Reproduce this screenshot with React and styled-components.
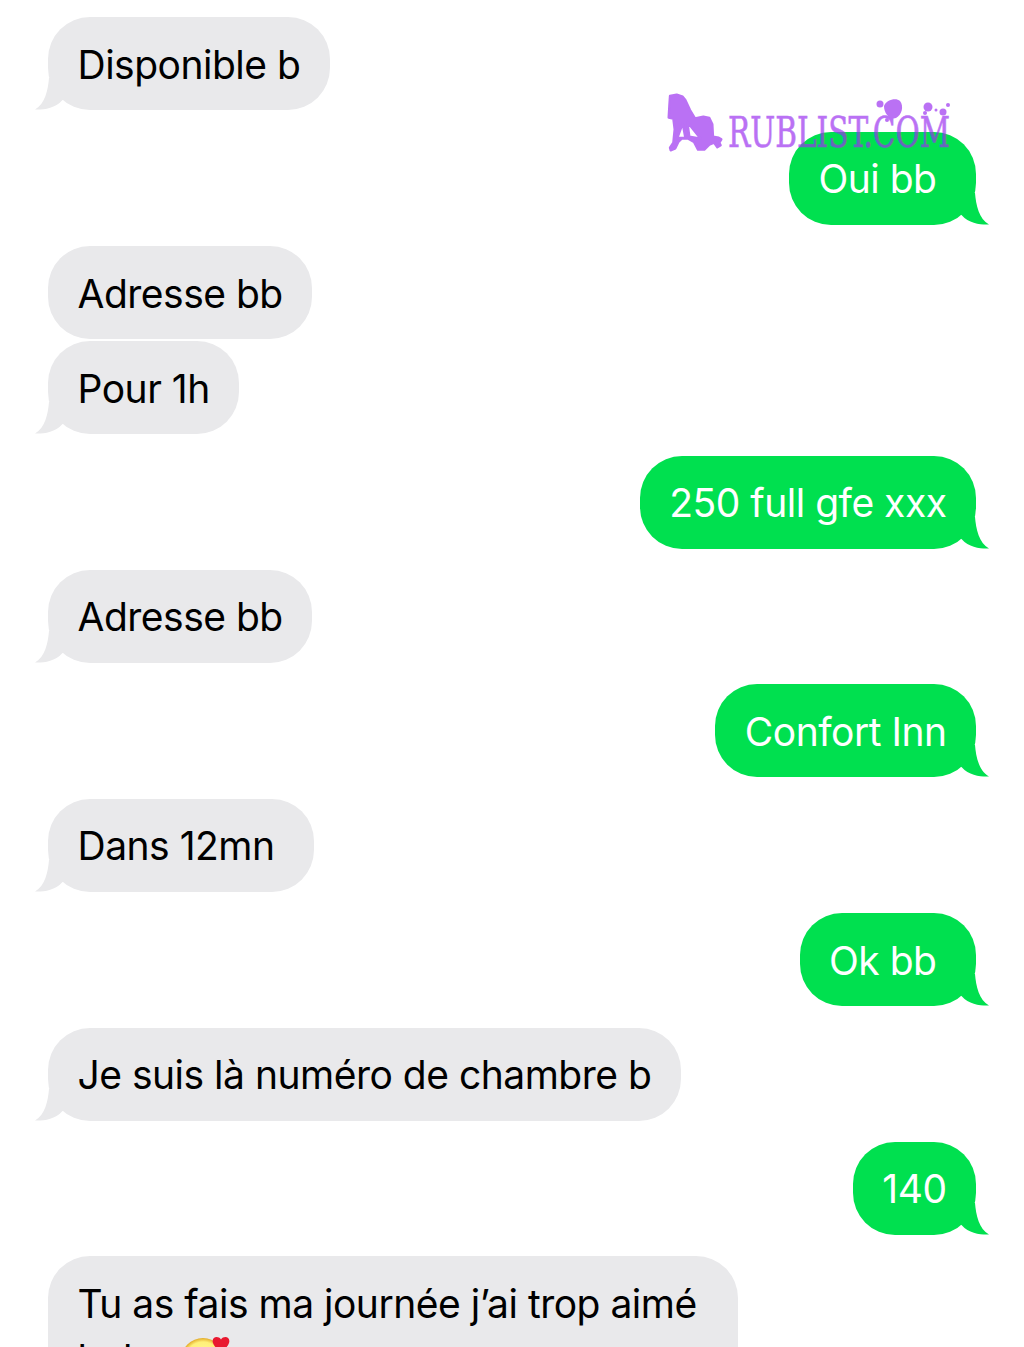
import React from "react";
import styled, { createGlobalStyle } from "styled-components";

const GlobalStyle = createGlobalStyle`
  html, body {
    margin: 0;
    padding: 0;
    background: #fff;
  }
`;

const Page = styled.div`
  position: relative;
  width: 1024px;
  height: 1347px;
  overflow: hidden;
  background: #fff;
  font-family: Inter, "Liberation Sans", sans-serif;
`;

const Thread = styled.div`
  display: flex;
  flex-direction: column;
  gap: 21.4px;
  padding: 17.4px 48px 0;
`;

const Group = styled.div`
  display: flex;
  flex-direction: column;
  align-items: flex-start;
  gap: 2px;
`;

const Bubble = styled.div`
  position: relative;
  align-self: ${(p) => (p.$sent ? "flex-end" : "flex-start")};
  box-sizing: border-box;
  max-width: 690px;
  padding: 23.5px ${(p) => (p.$trailing ? "39.5px" : "29.5px")} 21.5px 29.5px;
  border-radius: 42px;
  background: ${(p) => (p.$sent ? "#00e04f" : "#e9e9eb")};
  color: ${(p) => (p.$sent ? "#fff" : "#000")};
  font-size: 39px;
  line-height: 48px;
  letter-spacing: -0.5px;
`;

const TailShape = styled.svg`
  position: absolute;
  bottom: 0;
  width: 32px;
  height: 32px;
  ${(p) => (p.$sent ? "right: -13px;" : "left: -13px; transform: scaleX(-1);")}
`;

const Emoji = styled.svg`
  display: inline-block;
  width: 52px;
  height: 48px;
  margin: 10px 0 0 12px;
  vertical-align: -13px;
  overflow: visible;
`;

const Watermark = styled.div`
  position: absolute;
  top: 92px;
  left: 666px;
  display: flex;
  align-items: flex-end;
  gap: 4px;
  opacity: 0.68;
  color: rgb(154, 47, 240);
`;

const Figure = styled.svg`
  display: block;
  width: 58px;
  height: 60px;
`;

const Wordmark = styled.span`
  display: block;
  width: 221px;
  margin-bottom: -3px;
  font-family: "DejaVu Serif", "Liberation Serif", serif;
  font-stretch: condensed;
  font-size: 42px;
  line-height: 44px;
  white-space: nowrap;
  -webkit-text-stroke: 0.6px currentColor;
  transform: scaleX(0.783);
  transform-origin: left center;
`;

const Splashes = styled.svg`
  position: absolute;
  top: 6px;
  left: 190px;
  width: 96px;
  height: 30px;
  overflow: visible;
`;

function Tail({ sent, color }) {
  return (
    <TailShape $sent={sent} viewBox="0 0 32 32">
      <path d="M0 0 L18 0 C19 12 22 26 32 31.5 C26 32 12 31 5 22.5 L0 18 Z" fill={color} />
    </TailShape>
  );
}

function Message({ sent, trailing, tail = true, children }) {
  return (
    <Bubble $sent={sent} $trailing={trailing}>
      {children}
      {tail && <Tail sent={sent} color={sent ? "#00e04f" : "#e9e9eb"} />}
    </Bubble>
  );
}

function HeartEyes() {
  return (
    <Emoji viewBox="0 0 52 48">
      <defs>
        <radialGradient id="face" cx="0.5" cy="0.5" r="0.5">
          <stop offset="0" stopColor="#fff9a8" />
          <stop offset="0.82" stopColor="#fff078" />
          <stop offset="1" stopColor="#e3ab28" />
        </radialGradient>
      </defs>
      <circle cx="22" cy="22" r="22" fill="url(#face)" />
      <path d="M32 5 C30 -1 37 -3 40 1.5 C43 -3 50 -1 48 5 C47 9 42 12 40 15 C38 12 33 9 32 5 Z" fill="#e9182f" />
    </Emoji>
  );
}

export default function App() {
  return (
    <>
      <GlobalStyle />
      <Page>
        <Thread>
          <Message>Disponible b</Message>
          <Message sent trailing>Oui bb</Message>
          <Group>
            <Message tail={false}>Adresse bb</Message>
            <Message>Pour 1h</Message>
          </Group>
          <Message sent>250 full gfe xxx</Message>
          <Message>Adresse bb</Message>
          <Message sent>Confort Inn</Message>
          <Message trailing>Dans 12mn</Message>
          <Message sent trailing>Ok bb</Message>
          <Message>Je suis là numéro de chambre b</Message>
          <Message sent>140</Message>
          <Message>
            Tu as fais ma journée j’ai trop aimé bebe
            <HeartEyes />
          </Message>
        </Thread>

        <Watermark>
          <Figure viewBox="18 18 174 180">
            <path
              fillRule="evenodd"
              fill="currentColor"
              stroke="currentColor"
              strokeWidth="7"
              strokeLinejoin="round"
              d="M30 30 L50 26 L68 32 L76 42 L90 72 L105 97 L130 92 L148 96 L157 115 L159 152 L176 155 L184 160 L178 170 L182 178 L172 184 L162 170 L148 176 L133 191 L114 191 L102 168 L85 158 L65 158 L55 168 L46 187 L32 193 L30 185 L40 170 L44 130 L40 98 L26 95 L28 60 Z M68 112 L76 155 L52 156 Z M82 108 L122 158 L88 152 Z"
            />
          </Figure>
          <Wordmark>RUBLIST.COM</Wordmark>
          <Splashes viewBox="0 0 96 30">
            <g fill="currentColor">
              <path d="M28 8 C30 2 40 -1 44 3 C48 8 46 17 40 20 C34 22 28 16 28 8 Z" />
              <circle cx="24" cy="6" r="3.5" />
              <circle cx="31" cy="22" r="2" />
              <circle cx="72" cy="9" r="4.5" />
              <circle cx="87" cy="14" r="3.5" />
              <circle cx="92" cy="7" r="2" />
              <circle cx="80" cy="12" r="1.5" />
              <circle cx="69" cy="15" r="2" />
            </g>
          </Splashes>
        </Watermark>
      </Page>
    </>
  );
}
